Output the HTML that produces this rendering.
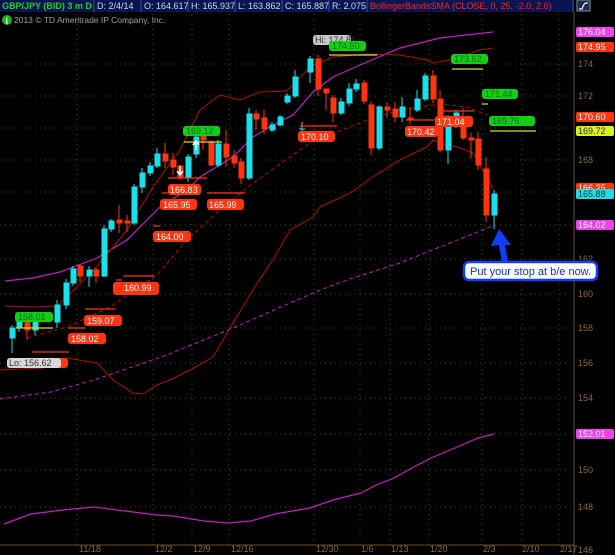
<!DOCTYPE html>
<html><head><meta charset="utf-8"><style>
html,body{margin:0;padding:0;background:#000;width:615px;height:555px;overflow:hidden}
svg{display:block}
text{font-family:"Liberation Sans",sans-serif}
</style></head><body>
<svg width="615" height="555" viewBox="0 0 615 555" xmlns="http://www.w3.org/2000/svg">
<rect width="615" height="555" fill="#000"/>
<!-- grid -->
<g stroke="#5a4418" stroke-width="1" stroke-dasharray="1,4">
<line x1="0" y1="64" x2="574" y2="64"/><line x1="0" y1="96" x2="574" y2="96"/><line x1="0" y1="128" x2="574" y2="128"/><line x1="0" y1="160" x2="574" y2="160"/><line x1="0" y1="192" x2="574" y2="192"/><line x1="0" y1="225" x2="574" y2="225"/><line x1="0" y1="259" x2="574" y2="259"/><line x1="0" y1="294" x2="574" y2="294"/><line x1="0" y1="328" x2="574" y2="328"/><line x1="0" y1="363" x2="574" y2="363"/><line x1="0" y1="398" x2="574" y2="398"/><line x1="0" y1="434" x2="574" y2="434"/><line x1="0" y1="470" x2="574" y2="470"/><line x1="0" y1="507" x2="574" y2="507"/>
<line x1="77" y1="14" x2="77" y2="545"/><line x1="153" y1="14" x2="153" y2="545"/><line x1="192" y1="14" x2="192" y2="545"/><line x1="229" y1="14" x2="229" y2="545"/><line x1="314" y1="14" x2="314" y2="545"/><line x1="360" y1="14" x2="360" y2="545"/><line x1="390" y1="14" x2="390" y2="545"/><line x1="429" y1="14" x2="429" y2="545"/><line x1="482" y1="14" x2="482" y2="545"/><line x1="522" y1="14" x2="522" y2="545"/><line x1="559" y1="14" x2="559" y2="545"/>
</g>
<line x1="574" y1="12" x2="574" y2="555" stroke="#6b5020"/>
<line x1="0" y1="545" x2="574" y2="545" stroke="#6b5020"/>
<!-- axis labels -->
<g fill="#8a6a30" font-size="9">
<text x="578" y="67">174</text><text x="578" y="99">172</text><text x="578" y="163">168</text><text x="578" y="262">162</text><text x="578" y="297">160</text><text x="578" y="331">158</text><text x="578" y="366">156</text><text x="578" y="401">154</text><text x="578" y="473">150</text><text x="578" y="510">148</text><text x="578" y="553">146</text>
<text x="79" y="552">11/18</text><text x="155" y="552">12/2</text><text x="193" y="552">12/9</text><text x="231" y="552">12/16</text><text x="316" y="552">12/30</text><text x="361" y="552">1/6</text><text x="391" y="552">1/13</text><text x="430" y="552">1/20</text><text x="483" y="552">2/3</text><text x="522" y="552">2/10</text><text x="560" y="552">2/17</text>
</g>
<!-- lines -->
<polyline fill="none" stroke="#c020c0" stroke-width="1.2" points="4,524 31,514 63,510 94,507 125,511 157,515 173,516 204,521 227,523 251,521 275,514 310,508 333,500 361,493 376,485 392,479 412,468 431,458 455,448 478,438 494,434"/>
<polyline fill="none" stroke="#c020c0" stroke-width="1" stroke-dasharray="4,3" points="0,399 51,392 94,380 167,355 233,328 320,290 350,279 400,263 450,243 490,227 495,226"/>
<polyline fill="none" stroke="#b01000" stroke-width="1" stroke-dasharray="4,3" points="27,338 67,327 110,307 157,275 187,240 220,210 253,183 310,143 367,120 400,110 440,104 467,107 487,115"/>
<polyline fill="none" stroke="#c020c0" stroke-width="1.2" points="5,281 33,278 60,272 97,258 127,240 160,207 187,190 200,177 233,157 253,137 273,125 293,115 313,92 333,77 367,62 400,48 440,38 493,32"/>
<polyline fill="none" stroke="#b01000" stroke-width="1" points="5,306 33,307 57,306 67,297 100,263 127,230 153,187 180,150 200,110 220,95 240,100 260,92 287,91 310,67 333,57 367,54 400,55 427,60 433,63 450,60 480,50 493,48"/>
<polyline fill="none" stroke="#b01000" stroke-width="1" points="0,370 43,368 67,358 97,363 113,380 133,393 143,394 157,385 170,380 190,370 213,357 233,323 253,290 277,253 290,230 313,217 320,207 350,193 373,177 400,160 427,147 433,140 440,143 457,147 473,153 493,188"/>
<!-- candles -->
<g id="c" stroke-width="1">
<g stroke="#19e0ea" fill="#19e0ea">
<line x1="12" y1="325" x2="12" y2="353"/><rect x="10" y="328" width="5" height="10"/>
<line x1="19" y1="318" x2="19" y2="332"/><rect x="17" y="322" width="5" height="6"/>
<line x1="35" y1="318" x2="35" y2="335"/><rect x="33" y="322" width="5" height="8"/>
<line x1="57" y1="300" x2="57" y2="328"/><rect x="55" y="305" width="5" height="17"/>
<line x1="66" y1="279" x2="66" y2="309"/><rect x="64" y="283" width="5" height="22"/>
<line x1="73" y1="266" x2="73" y2="286"/><rect x="71" y="269" width="5" height="14"/>
<line x1="89" y1="266" x2="89" y2="287"/><rect x="87" y="270" width="5" height="6"/>
<line x1="104" y1="225" x2="104" y2="277"/><rect x="102" y="229" width="5" height="47"/>
<line x1="111" y1="219" x2="111" y2="232"/><rect x="109" y="221" width="5" height="8"/>
<line x1="134" y1="184" x2="134" y2="225"/><rect x="132" y="187" width="5" height="36"/>
<line x1="142" y1="168" x2="142" y2="193"/><rect x="140" y="173" width="5" height="14"/>
<line x1="150" y1="162" x2="150" y2="176"/><rect x="148" y="166" width="5" height="7"/>
<line x1="157" y1="148" x2="157" y2="168"/><rect x="155" y="154" width="5" height="12"/>
<line x1="188" y1="154" x2="188" y2="182"/><rect x="186" y="157" width="5" height="21"/>
<line x1="196" y1="132" x2="196" y2="158"/><rect x="194" y="137" width="5" height="17"/>
<line x1="218" y1="140" x2="218" y2="167"/><rect x="216" y="144" width="5" height="21"/>
<line x1="249" y1="108" x2="249" y2="180"/><rect x="247" y="114" width="5" height="64"/>
<line x1="272" y1="122" x2="272" y2="132"/><rect x="270" y="125" width="5" height="5"/>
<line x1="280" y1="115" x2="280" y2="126"/><rect x="278" y="117" width="5" height="8"/>
<line x1="287" y1="93" x2="287" y2="104"/><rect x="285" y="96" width="5" height="6"/>
<line x1="295" y1="70" x2="295" y2="98"/><rect x="293" y="77" width="5" height="19"/>
<line x1="302" y1="122" x2="302" y2="136"/><line x1="299" y1="129" x2="305" y2="129"/>
<line x1="310" y1="56" x2="310" y2="83"/><rect x="308" y="59" width="5" height="13"/>
<line x1="341" y1="98" x2="341" y2="115"/><rect x="339" y="102" width="5" height="11"/>
<line x1="349" y1="83" x2="349" y2="106"/><rect x="347" y="89" width="5" height="14"/>
<line x1="356" y1="79" x2="356" y2="92"/><rect x="354" y="84" width="5" height="5"/>
<line x1="379" y1="105" x2="379" y2="150"/><rect x="377" y="107" width="5" height="41"/>
<line x1="402" y1="97" x2="402" y2="122"/><rect x="400" y="107" width="5" height="10"/>
<line x1="417" y1="90" x2="417" y2="112"/><rect x="415" y="99" width="5" height="11"/>
<line x1="425" y1="73" x2="425" y2="101"/><rect x="423" y="76" width="5" height="23"/>
<line x1="448" y1="115" x2="448" y2="164"/><rect x="446" y="121" width="5" height="29"/>
<line x1="456" y1="110" x2="456" y2="128"/><rect x="454" y="113" width="5" height="7"/>
<line x1="494" y1="190" x2="494" y2="229"/><rect x="492" y="194" width="5" height="21"/>
</g>
<g stroke="#ff3510" fill="#ff3510">
<line x1="27" y1="315" x2="27" y2="340"/><rect x="25" y="322" width="5" height="8"/>
<line x1="80" y1="264" x2="80" y2="282"/><rect x="78" y="266" width="5" height="10"/>
<line x1="96" y1="268" x2="96" y2="283"/><rect x="94" y="270" width="5" height="6"/>
<line x1="119" y1="205" x2="119" y2="233"/><rect x="117" y="220" width="5" height="3"/>
<line x1="127" y1="215" x2="127" y2="232"/><rect x="125" y="221" width="5" height="2"/>
<line x1="165" y1="143" x2="165" y2="168"/><rect x="163" y="154" width="5" height="7"/>
<line x1="173" y1="153" x2="173" y2="175"/><rect x="171" y="160" width="5" height="7"/>
<line x1="180" y1="165" x2="180" y2="180"/><rect x="178" y="166" width="5" height="12"/>
<line x1="203" y1="128" x2="203" y2="150"/><rect x="201" y="136" width="5" height="4"/>
<line x1="211" y1="140" x2="211" y2="166"/><rect x="209" y="143" width="5" height="22"/>
<line x1="226" y1="130" x2="226" y2="167"/><rect x="224" y="144" width="5" height="13"/>
<line x1="234" y1="150" x2="234" y2="168"/><rect x="232" y="156" width="5" height="7"/>
<line x1="241" y1="158" x2="241" y2="184"/><rect x="239" y="162" width="5" height="16"/>
<line x1="256" y1="110" x2="256" y2="130"/><rect x="254" y="114" width="5" height="5"/>
<line x1="264" y1="110" x2="264" y2="134"/><rect x="262" y="118" width="5" height="11"/>
<line x1="318" y1="55" x2="318" y2="96"/><rect x="316" y="59" width="5" height="30"/>
<line x1="326" y1="89" x2="326" y2="110"/><rect x="324" y="89" width="5" height="4"/>
<line x1="333" y1="95" x2="333" y2="122"/><rect x="331" y="98" width="5" height="15"/>
<line x1="364" y1="80" x2="364" y2="104"/><rect x="362" y="83" width="5" height="18"/>
<line x1="371" y1="101" x2="371" y2="155"/><rect x="369" y="105" width="5" height="43"/>
<line x1="387" y1="102" x2="387" y2="118"/><rect x="385" y="107" width="5" height="3"/>
<line x1="395" y1="102" x2="395" y2="122"/><rect x="393" y="109" width="5" height="8"/>
<line x1="410" y1="107" x2="410" y2="124"/><rect x="408" y="118" width="5" height="2"/>
<line x1="433" y1="70" x2="433" y2="103"/><rect x="431" y="76" width="5" height="23"/>
<line x1="440" y1="90" x2="440" y2="152"/><rect x="438" y="99" width="5" height="51"/>
<line x1="463" y1="108" x2="463" y2="140"/><rect x="461" y="117" width="5" height="21"/>
<line x1="471" y1="133" x2="471" y2="158"/><rect x="469" y="138" width="5" height="2"/>
<line x1="478" y1="132" x2="478" y2="170"/><rect x="476" y="139" width="5" height="26"/>
<line x1="486" y1="157" x2="486" y2="222"/><rect x="484" y="169" width="5" height="46"/>
</g>
</g>
<!-- horizontal marker lines -->
<g stroke="#ff3510" stroke-width="1.2">
<line x1="300" y1="126" x2="337" y2="126"/><line x1="406" y1="120" x2="437" y2="120"/><line x1="438" y1="111" x2="474" y2="111"/><line x1="168" y1="178" x2="207" y2="178"/><line x1="162" y1="193" x2="190" y2="193"/><line x1="207" y1="193" x2="245" y2="193"/><line x1="153" y1="226" x2="160" y2="226"/><line x1="123" y1="276" x2="154" y2="276"/><line x1="85" y1="309" x2="115" y2="309"/><line x1="68" y1="328" x2="85" y2="328"/><line x1="32" y1="352" x2="69" y2="352"/><line x1="116" y1="280" x2="122" y2="280"/>
</g>
<g stroke="#d8e020" stroke-width="1.2">
<line x1="184" y1="142" x2="222" y2="142"/><line x1="16" y1="328" x2="53" y2="328"/><line x1="329" y1="55" x2="377" y2="55"/><line x1="452" y1="69" x2="483" y2="69"/><line x1="482" y1="104" x2="488" y2="104"/><line x1="490" y1="131" x2="536" y2="131"/>
</g>
<!-- arrows white -->
<path d="M180,166 v8 M177,171 l3,4 l3,-4" stroke="#fff" stroke-width="1.5" fill="none"/>
<path d="M196,150 v-8 M193,145 l3,-4 l3,4" stroke="#fff" stroke-width="1.5" fill="none"/>
<!-- chart labels -->
<g font-size="9" fill="#fff">
<rect x="313" y="35" width="38" height="10" rx="3" fill="#c8c8c8"/><text x="315" y="43" fill="#333">Hi: 174.81</text>
<rect x="329" y="41" width="37" height="10" rx="3" fill="#10d010"/><text x="332" y="49" fill="#063">174.50</text>
<rect x="451" y="54" width="37" height="10" rx="3" fill="#10d010"/><text x="454" y="62" fill="#063">173.62</text>
<rect x="482" y="89" width="36" height="10" rx="3" fill="#10d010"/><text x="485" y="97" fill="#063">171.44</text>
<rect x="489" y="116" width="46" height="10" rx="3" fill="#10d010"/><text x="492" y="124" fill="#063">169.76</text>
<rect x="183" y="126" width="37" height="10" rx="3" fill="#10d010"/><text x="186" y="134" fill="#063">169.12</text>
<rect x="15" y="312" width="38" height="10" rx="3" fill="#10d010"/><text x="18" y="320" fill="#063">158.01</text>
<g fill="#ff3510">
<rect x="298" y="131" width="37" height="11" rx="3"/><rect x="405" y="126" width="33" height="11" rx="3"/><rect x="435" y="116" width="38" height="11" rx="3"/><rect x="168" y="184" width="33" height="11" rx="3"/><rect x="160" y="199" width="37" height="11" rx="3"/><rect x="207" y="199" width="37" height="11" rx="3"/><rect x="153" y="231" width="38" height="11" rx="3"/><rect x="113" y="282" width="46" height="13" rx="3"/><rect x="84" y="315" width="38" height="11" rx="3"/><rect x="68" y="333" width="38" height="11" rx="3"/><rect x="50" y="358" width="18" height="10" rx="3"/>
</g>
<text x="301" y="140">170.10</text><text x="407" y="135">170.42</text><text x="437" y="125">171.04</text><text x="170" y="193">166.83</text><text x="163" y="208">165.95</text><text x="209" y="208">165.99</text><text x="156" y="240">164.00</text><text x="124" y="291">160.99</text><text x="87" y="324">159.07</text><text x="71" y="342">158.02</text>
<rect x="7" y="358" width="54" height="10" rx="3" fill="#d8d8d8"/><text x="9" y="366" fill="#333">Lo: 156.62</text>
</g>
<!-- right value tags -->
<g font-size="9" fill="#fff">
<rect x="576" y="27" width="38" height="10" rx="2" fill="#f040f0"/><text x="578" y="35">176.04</text>
<rect x="576" y="42" width="38" height="10" rx="2" fill="#ff3510"/><text x="578" y="50">174.95</text>
<rect x="576" y="112" width="38" height="10" rx="2" fill="#ff3510"/><text x="578" y="120">170.60</text>
<rect x="576" y="126" width="38" height="10" rx="2" fill="#d8f020"/><text x="578" y="134" fill="#333">169.72</text>
<rect x="576" y="183" width="38" height="10" rx="2" fill="#ff3510"/><text x="578" y="191">166.25</text>
<rect x="576" y="189" width="38" height="10" rx="2" fill="#19e0ea"/><text x="578" y="197" fill="#033">165.88</text>
<rect x="576" y="220" width="38" height="10" rx="2" fill="#f040f0"/><text x="578" y="228">164.02</text>
<rect x="576" y="429" width="38" height="10" rx="2" fill="#f040f0"/><text x="578" y="437">152.01</text>
</g>
<!-- callout -->
<path d="M499,229 L511,245 L505,245 L508,262 L502,262 L499,245 L491,246 Z" fill="#1040ff"/>
<rect x="464" y="262" width="133" height="18" rx="5" fill="#fff" stroke="#1040ff" stroke-width="2.5"/>
<text x="470" y="275" font-size="11" fill="#1030e0">Put your stop at b/e now.</text>
<!-- top bar -->
<rect x="0" y="0" width="574" height="12" fill="#0a1450"/>
<g stroke="#3050a0"><line x1="94" y1="0" x2="94" y2="12"/><line x1="141" y1="0" x2="141" y2="12"/><line x1="188" y1="0" x2="188" y2="12"/><line x1="235" y1="0" x2="235" y2="12"/><line x1="282" y1="0" x2="282" y2="12"/><line x1="329" y1="0" x2="329" y2="12"/><line x1="367" y1="0" x2="367" y2="12"/><line x1="573" y1="0" x2="573" y2="12"/></g>
<g font-size="9" fill="#d0d8e8">
<text x="2" y="9" fill="#20d020" font-weight="bold">GBP/JPY (BID) 3 m D</text>
<text x="97" y="9">D: 2/4/14</text><text x="144" y="9">O: 164.617</text><text x="191" y="9">H: 165.937</text><text x="238" y="9">L: 163.862</text><text x="285" y="9">C: 165.887</text><text x="332" y="9">R: 2.075</text>
<text x="370" y="9" fill="#ff2020">BollingerBandsSMA (CLOSE, 0, 25, -2.0, 2.0)</text>
</g>
<rect x="577" y="0" width="13" height="11" fill="#1a2a4a" stroke="#8090a0"/>
<path d="M579,9 h3 q2,-6 4,-6 h2" stroke="#fff" fill="none" stroke-width="1.2"/>
<circle cx="7" cy="20" r="5" fill="#20b020"/><text x="5.5" y="24" font-size="9" fill="#fff" font-weight="bold">i</text>
<text x="14" y="23" font-size="8.5" fill="#a0a0a0">2013 © TD Ameritrade IP Company, Inc.</text>
</svg>
</body></html>
